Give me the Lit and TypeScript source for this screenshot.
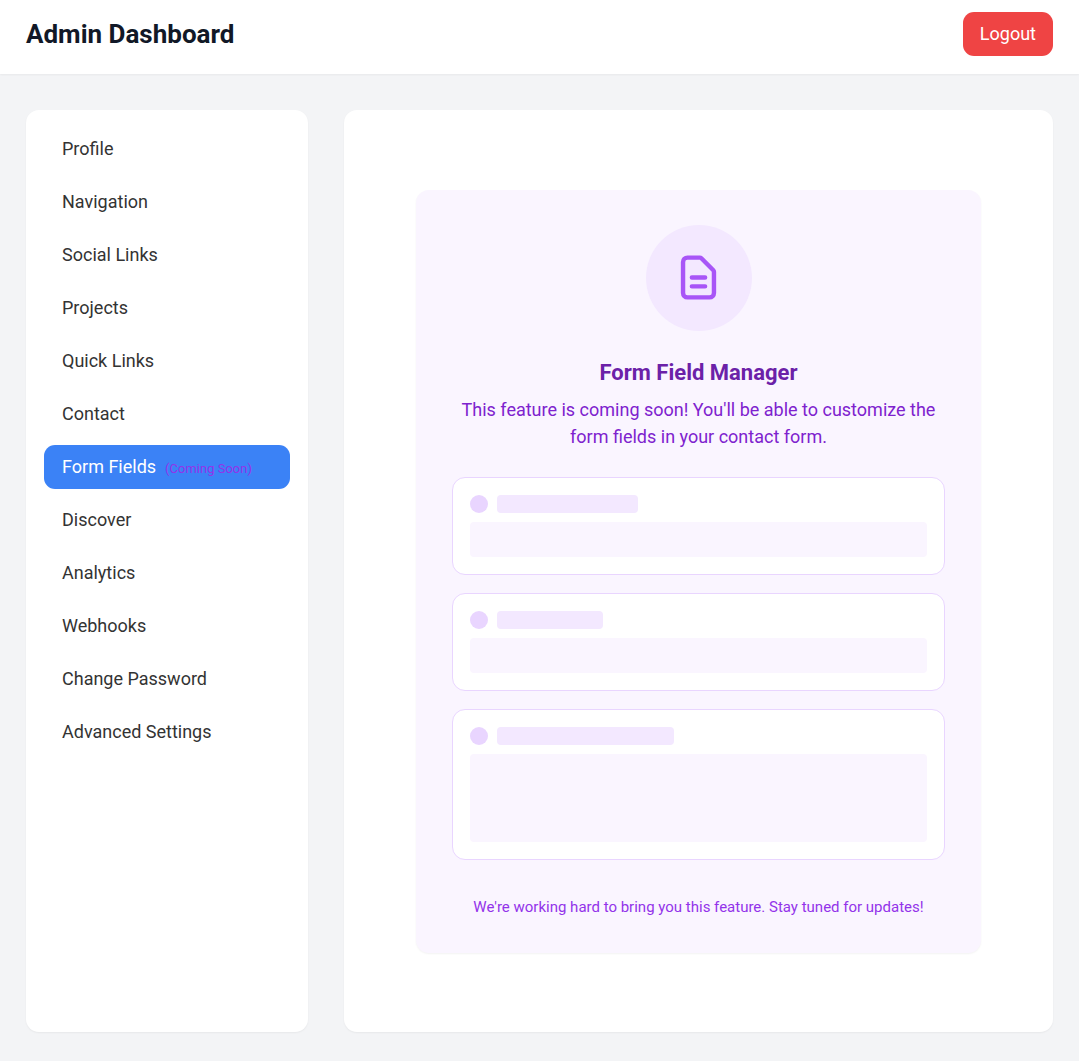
import { LitElement, html, css } from "lit";
import { customElement, property, state } from "lit/decorators.js";
import { classMap } from "lit/directives/class-map.js";

interface Section {
  label: string;
  note?: string;
}

const SECTIONS: Section[] = [
  { label: "Profile" },
  { label: "Navigation" },
  { label: "Social Links" },
  { label: "Projects" },
  { label: "Quick Links" },
  { label: "Contact" },
  { label: "Form Fields", note: "(Coming Soon)" },
  { label: "Discover" },
  { label: "Analytics" },
  { label: "Webhooks" },
  { label: "Change Password" },
  { label: "Advanced Settings" },
];

@customElement("field-skeleton")
class FieldSkeleton extends LitElement {
  @property() size = "medium";
  @property({ type: Boolean }) tall = false;

  static styles = css`
    :host {
      display: block;
      padding: 17px;
      background: #fff;
      border: 1px solid #e9d5ff;
      border-radius: 13px;
    }
    .head {
      display: flex;
      align-items: center;
      gap: 9px;
      margin-bottom: 9px;
    }
    .dot {
      width: 18px;
      height: 18px;
      border-radius: 50%;
      background: #e9d5ff;
    }
    .bar {
      height: 18px;
      border-radius: 4px;
      background: #f3e8ff;
    }
    .small {
      width: 106px;
    }
    .medium {
      width: 141px;
    }
    .large {
      width: 177px;
    }
    .field {
      height: 35px;
      border-radius: 4px;
      background: #faf5ff;
    }
    .field.tall {
      height: 88px;
    }
  `;

  render() {
    return html`
      <div class="head">
        <div class="dot"></div>
        <div class="bar ${this.size}"></div>
      </div>
      <div class=${classMap({ field: true, tall: this.tall })}></div>
    `;
  }
}

@customElement("app-root")
class AppRoot extends LitElement {
  @state() private active = "Form Fields";

  static styles = css`
    :host {
      display: flex;
      flex-direction: column;
      min-height: 100vh;
      background: #f3f4f6;
      color: #333;
      font: 18px/27px Roboto, "Liberation Sans", sans-serif;
    }
    * {
      box-sizing: border-box;
    }
    h1,
    h2,
    p {
      margin: 0;
    }
    button {
      border: 0;
      border-radius: 11px;
      padding: 8px 18px;
      font: inherit;
      line-height: 28px;
      cursor: pointer;
    }
    .header {
      display: flex;
      align-items: center;
      justify-content: space-between;
      padding: 12px 26px 18px;
      background: #fff;
      box-shadow: 0 1px 2px rgba(0, 0, 0, 0.05);
    }
    .title {
      font-size: 26px;
      line-height: 36px;
      font-weight: 700;
      color: #111827;
    }
    .logout {
      padding: 8px 17px;
      background: #ef4444;
      color: #fff;
    }
    .layout {
      flex: 1;
      display: grid;
      grid-template-columns: 282px minmax(0, 1fr);
      gap: 36px;
      padding: 36px 26px 29px;
    }
    .card {
      background: #fff;
      border-radius: 13px;
      box-shadow: 0 1px 2px rgba(0, 0, 0, 0.05);
    }
    .nav {
      display: flex;
      flex-direction: column;
      gap: 9px;
      padding: 17px 18px;
    }
    .item {
      display: flex;
      align-items: baseline;
      gap: 9px;
      background: transparent;
      color: #333;
      text-align: left;
    }
    .item.active {
      background: #3b82f6;
      color: #fff;
    }
    .note {
      font-size: 13px;
      line-height: 18px;
      color: #9333ea;
    }
    .main {
      display: flex;
      align-items: center;
      justify-content: center;
      padding: 36px;
    }
    .panel {
      display: flex;
      flex-direction: column;
      align-items: center;
      width: 100%;
      max-width: 565px;
      padding: 35px 36px;
      background: #faf5ff;
      border-radius: 13px;
      box-shadow: 0 1px 2px rgba(0, 0, 0, 0.05);
      text-align: center;
    }
    .badge {
      display: grid;
      place-items: center;
      width: 106px;
      height: 106px;
      margin-bottom: 26px;
      border-radius: 50%;
      background: #f3e8ff;
      color: #a855f7;
    }
    .icon {
      width: 53px;
      height: 53px;
    }
    .heading {
      margin-bottom: 8px;
      font-size: 22px;
      line-height: 31px;
      font-weight: 700;
      color: #6b21a8;
    }
    .text {
      margin-bottom: 27px;
      color: #7e22ce;
    }
    .fields {
      display: flex;
      flex-direction: column;
      gap: 18px;
      width: 100%;
      margin-bottom: 36px;
    }
    .foot {
      font-size: 15px;
      line-height: 22px;
      color: #9333ea;
    }
  `;

  render() {
    return html`
      <header class="header">
        <h1 class="title">Admin Dashboard</h1>
        <button class="logout" type="button">Logout</button>
      </header>
      <div class="layout">
        <nav class="card nav">
          ${SECTIONS.map(
            (s) => html`<button
              type="button"
              class=${classMap({ item: true, active: s.label === this.active })}
              @click=${() => (this.active = s.label)}
            >
              <span>${s.label}</span>
              ${s.note ? html`<span class="note">${s.note}</span>` : null}
            </button>`
          )}
        </nav>
        <main class="card main">
          <section class="panel">
            <div class="badge">
              <svg
                class="icon"
                viewBox="0 0 24 24"
                fill="none"
                stroke="currentColor"
                stroke-width="2"
                stroke-linecap="round"
                stroke-linejoin="round"
                aria-hidden="true"
              >
                <path
                  d="M9 12h6m-6 4h6m2 5H7a2 2 0 01-2-2V5a2 2 0 012-2h5.586a1 1 0 01.707.293l5.414 5.414a1 1 0 01.293.707V19a2 2 0 01-2 2z"
                />
              </svg>
            </div>
            <h2 class="heading">Form Field Manager</h2>
            <p class="text">
              This feature is coming soon! You'll be able to customize the form
              fields in your contact form.
            </p>
            <div class="fields">
              <field-skeleton size="medium"></field-skeleton>
              <field-skeleton size="small"></field-skeleton>
              <field-skeleton size="large" tall></field-skeleton>
            </div>
            <p class="foot">
              We're working hard to bring you this feature. Stay tuned for
              updates!
            </p>
          </section>
        </main>
      </div>
    `;
  }
}
